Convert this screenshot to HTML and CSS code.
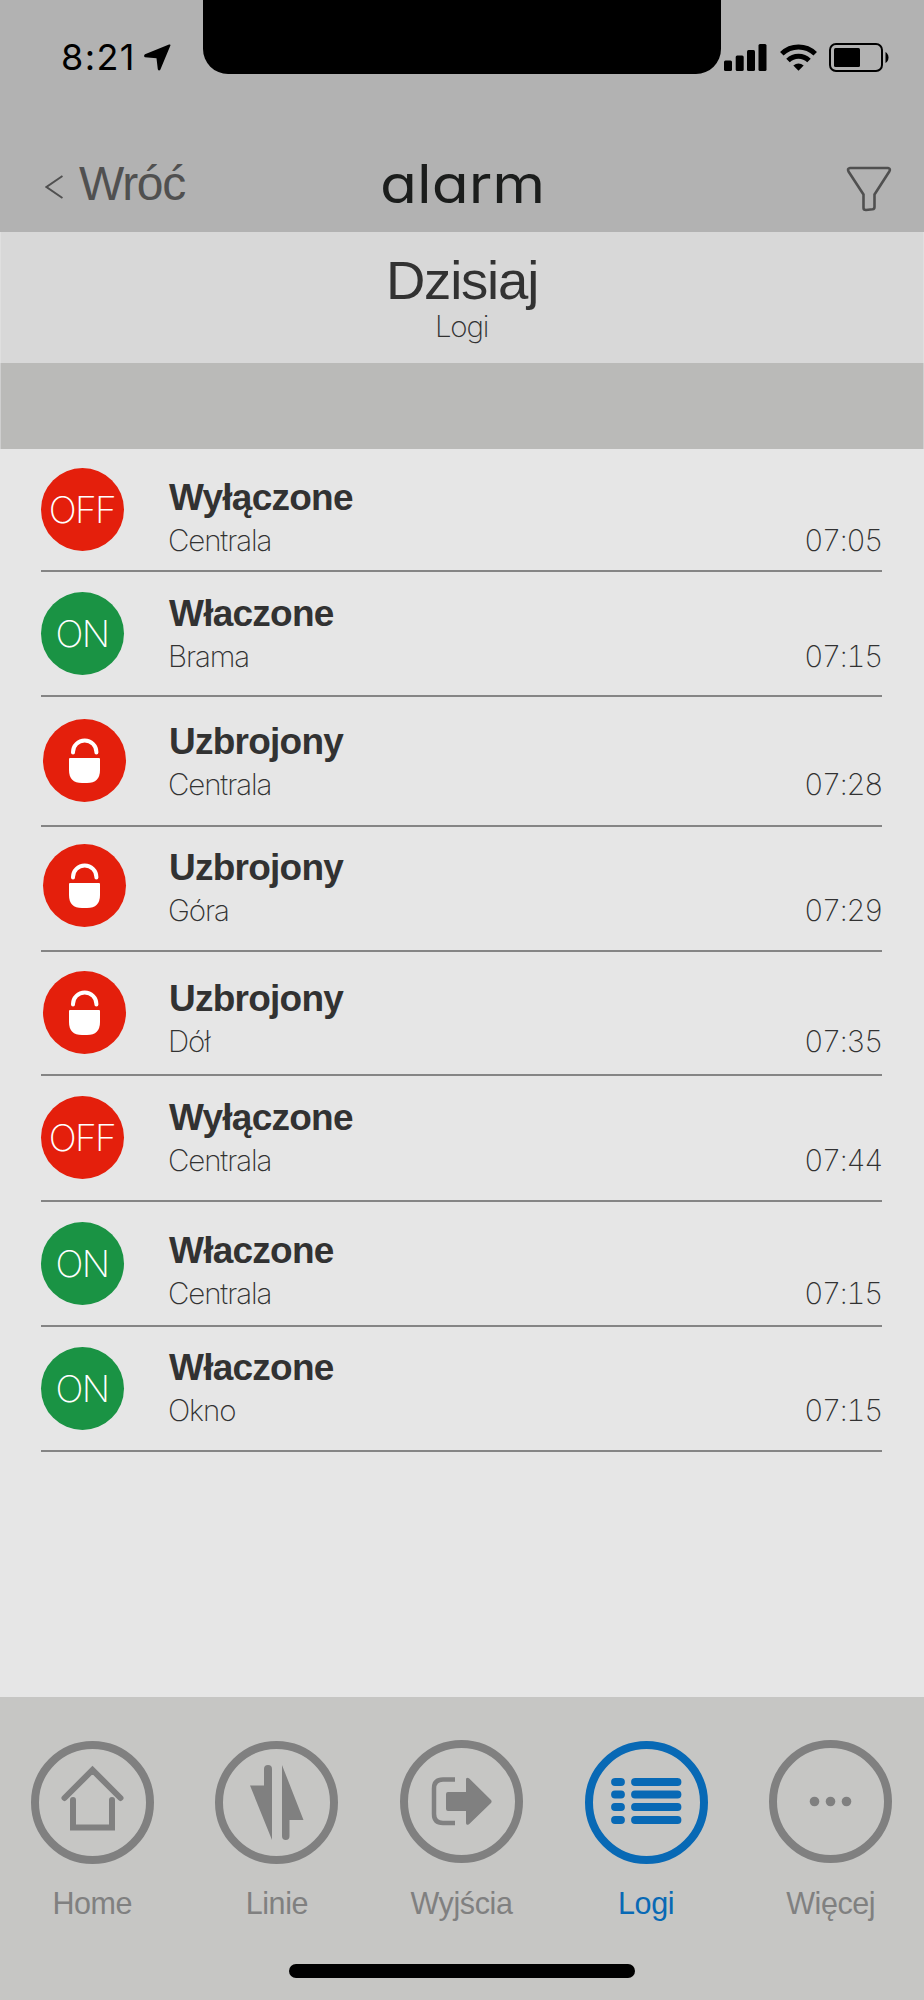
FILE: index.html
```
<!DOCTYPE html>
<html lang="pl">

<head>
    <meta charset="UTF-8">
    <meta name="viewport" content="width=device-width, initial-scale=1.0">
    <title>Logi</title>
    <link rel="stylesheet" href="styles.css">
</head>

<body>
    <!-- shared icons -->
    <svg width="0" height="0" class="defs">
        <symbol id="lock" viewBox="0 0 83 83">
            <path d="M30 33.500 V33 a11.700 11.500 0 0 1 23.400 0 V33.500" fill="none" stroke="#fff" stroke-width="4" stroke-linecap="round"/>
            <path d="M27 39 h29 q1 0 1 1 v11 q0 13 -13 13 h-5 q-13 0 -13 -13 v-11 q0 -1 1 -1z" fill="#fff"/>
        </symbol>
    </svg>

    <header class="header">
        <div class="notch"></div>
        <div class="status-bar">
            <span class="clock">8:21</span>
            <svg class="location" width="27" height="27" viewBox="0 0 27 27">
                <path d="M26.500 1.200 Q26.500 0 25 .600 L1 10.300 Q-.800 12 1 13.200 L12.500 14.200 L13.800 25.200 Q14.800 27.200 16.300 25.800 Z"/>
            </svg>
            <div class="signals">
                <svg width="43" height="27" viewBox="0 0 43 27">
                    <rect x="0" y="16.500" width="8" height="10.500" rx="1.500"/>
                    <rect x="11.700" y="11.500" width="8" height="15.500" rx="1.500"/>
                    <rect x="23" y="6" width="8" height="21" rx="1.500"/>
                    <rect x="34.500" y="0" width="8" height="27" rx="1.500"/>
                </svg>
                <svg width="37" height="27" viewBox="0 0 37 27">
                    <g fill="none" stroke="#000" stroke-width="5">
                        <path d="M1.800 9.700 A24 24 0 0 1 35.200 9.700"/>
                        <path d="M8 16.500 A15 15 0 0 1 29 16.500"/>
                    </g>
                    <path d="M13.300 21.500 Q18.500 17.500 23.700 21.500 L18.500 26.800z"/>
                </svg>
                <svg width="60" height="29" viewBox="0 0 60 29">
                    <rect x="1" y="1" width="52" height="27" rx="6" fill="none" stroke="#000" stroke-width="2"/>
                    <rect x="5" y="5" width="26" height="19" rx="1.500"/>
                    <path d="M56.500 9 Q59.500 11 59.500 14.500 T56.500 20z"/>
                </svg>
            </div>
        </div>
        <nav class="nav">
            <a class="back">
                <svg width="18" height="24" viewBox="0 0 18 24">
                    <path d="M17.500 1 L1.500 12 L17.500 23" fill="none" stroke="#505050" stroke-width="2"/>
                </svg>
                <span>Wróć</span>
            </a>
            <div class="brand">alarm</div>
            <a class="filter">
                <svg width="46" height="46" viewBox="0 0 46 46">
                    <path d="M4 2 H42 Q45 2.500 43.300 5.500 L28.500 28.500 V41 Q28.500 43 26.500 43.300 L20 44 Q17.500 44 17.500 42 V28.500 L2.500 5.500 Q1 2.500 4 2z" fill="none" stroke="#505050" stroke-width="2.600" stroke-linejoin="round"/>
                </svg>
            </a>
        </nav>
    </header>

    <section class="day">
        <h1>Dzisiaj</h1>
        <p>Logi</p>
    </section>
    <div class="band"></div>

    <main>
        <ul class="logs">
            <li class="log">
                <span class="badge off">OFF</span>
                <div class="info"><h2>Wyłączone</h2><p>Centrala</p></div>
                <time>07:05</time>
            </li>
            <li class="log">
                <span class="badge on">ON</span>
                <div class="info"><h2>Właczone</h2><p>Brama</p></div>
                <time>07:15</time>
            </li>
            <li class="log">
                <span class="badge lock"><svg width="83" height="83"><use href="#lock"/></svg></span>
                <div class="info"><h2>Uzbrojony</h2><p>Centrala</p></div>
                <time>07:28</time>
            </li>
            <li class="log">
                <span class="badge lock"><svg width="83" height="83"><use href="#lock"/></svg></span>
                <div class="info"><h2>Uzbrojony</h2><p>Góra</p></div>
                <time>07:29</time>
            </li>
            <li class="log">
                <span class="badge lock"><svg width="83" height="83"><use href="#lock"/></svg></span>
                <div class="info"><h2>Uzbrojony</h2><p>Dół</p></div>
                <time>07:35</time>
            </li>
            <li class="log">
                <span class="badge off">OFF</span>
                <div class="info"><h2>Wyłączone</h2><p>Centrala</p></div>
                <time>07:44</time>
            </li>
            <li class="log">
                <span class="badge on">ON</span>
                <div class="info"><h2>Właczone</h2><p>Centrala</p></div>
                <time>07:15</time>
            </li>
            <li class="log">
                <span class="badge on">ON</span>
                <div class="info"><h2>Właczone</h2><p>Okno</p></div>
                <time>07:15</time>
            </li>
        </ul>
    </main>

    <footer class="footer">
        <div class="tabs">
            <a class="tab">
                <svg width="123" height="123" viewBox="0 0 123 123">
                    <circle cx="61.500" cy="61.500" r="57.500"/>
                    <path d="M33.500 57 L61.500 29 L89.500 57 M42 59 V86.500 H81 V59" stroke-width="6" stroke-linecap="round"/>
                </svg>
                <span>Home</span>
            </a>
            <a class="tab">
                <svg width="123" height="123" viewBox="0 0 123 123">
                    <circle cx="61.500" cy="61.500" r="57.500"/>
                    <path class="solid" d="M49 28 q0 -4 4 -4 t4 4 V99 L35 44.500 H49z M67 24 L88.500 79 H74.500 V95 q0 4 -3.750 4 t-3.750 -4z"/>
                </svg>
                <span>Linie</span>
            </a>
            <a class="tab raised">
                <svg width="123" height="123" viewBox="0 0 123 123">
                    <circle cx="61.500" cy="61.500" r="57.500"/>
                    <path d="M55 39.500 H43 Q34 39.500 34 48.500 V74 Q34 83 43 83 H55" stroke-width="4.500"/>
                    <path class="solid" d="M48 52 H66 V39.500 q0 -3 3 -1.200 L91 60 q1.200 1.500 0 3 L69 84.200 q-3 1.500 -3 -1.200 V71 H48 q-2 0 -2 -2 V54 q0 -2 2 -2z"/>
                </svg>
                <span>Wyjścia</span>
            </a>
            <a class="tab active">
                <svg width="123" height="123" viewBox="0 0 123 123">
                    <circle cx="61.500" cy="61.500" r="57.500"/>
                    <path d="M30 41 H36 M50 41 H92.500 M30 53.500 H36 M50 53.500 H92.500 M30 66 H36 M50 66 H92.500 M30 79 H36 M50 79 H92.500" stroke-width="7.800" stroke-linecap="round"/>
                </svg>
                <span>Logi</span>
            </a>
            <a class="tab raised">
                <svg width="123" height="123" viewBox="0 0 123 123">
                    <circle cx="61.500" cy="61.500" r="57.500"/>
                    <g>
                        <circle class="solid" cx="45.500" cy="61.500" r="4.800"/>
                        <circle class="solid" cx="61.500" cy="61.500" r="4.800"/>
                        <circle class="solid" cx="77.500" cy="61.500" r="4.800"/>
                    </g>
                </svg>
                <span>Więcej</span>
            </a>
        </div>
        <div class="home-indicator"></div>
    </footer>
</body>

</html>
```
FILE: styles.css
```
* {
    box-sizing: border-box;
    margin: 0;
    padding: 0;
}

body {
    width: 924px;
    height: 2000px;
    display: flex;
    flex-direction: column;
    font-family: "Liberation Sans", Arial, sans-serif;
    background-color: #e6e6e6;
    color: #323232;
    overflow: hidden;
}

svg {
    display: block;
    flex: none;
}

.defs {
    position: absolute;
}

/* Header */
.header {
    position: relative;
    height: 232px;
    background-color: #b2b2b2;
}

.notch {
    position: absolute;
    top: 0;
    left: 203px;
    width: 518px;
    height: 74px;
    background: #000;
    border-radius: 0 0 25px 25px;
}

.status-bar {
    display: flex;
    align-items: flex-start;
    height: 110px;
    padding: 43px 35px 0 61px;
    color: #000;
}

.clock {
    width: 83px;
    font-family: Inter, sans-serif;
    font-size: 36px;
    line-height: 28px;
    letter-spacing: 1.4px;
}

.location {
    margin-top: 1px;
}

.signals {
    display: flex;
    align-items: center;
    gap: 12.5px;
    margin-left: auto;
}

.nav {
    display: grid;
    grid-template-columns: 1fr 1fr 1fr;
    align-items: start;
    padding: 47px 32px 0 45px;
}

.back {
    display: flex;
    align-items: center;
    gap: 16px;
    margin-top: 3px;
    color: #505050;
    font-size: 48px;
    line-height: 48px;
    letter-spacing: -1.3px;
}

.back svg {
    margin-top: 6px;
}

.brand {
    color: #1b1d1c;
    font-family: Inter, sans-serif;
    font-size: 53px;
    line-height: 54px;
    font-feature-settings: "cv11";
    text-align: center;
    margin-left: -11px;
    transform: scaleX(1.14);
}

.filter {
    margin: 9px 0 0 auto;
}

/* Current day */
.day {
    height: 131px;
    padding-top: 19px;
    background-color: #d8d8d8;
    border: solid #dfdfdf;
    border-width: 0 1px;
    text-align: center;
}

.day h1 {
    font-size: 54.5px;
    font-weight: normal;
    line-height: 60px;
    letter-spacing: -1.2px;
}

.day p {
    margin-top: -2px;
    padding-right: 1px;
    font-family: Inter, sans-serif;
    font-size: 29.5px;
    font-weight: 200;
    line-height: 34px;
    letter-spacing: -1.2px;
}

.band {
    height: 86px;
    background-color: #babab8;
    border: solid #cfcfcf;
    border-width: 0 1px;
}

/* Log list */
main {
    flex: 1;
}

.logs {
    list-style: none;
    margin: 0 42px 0 41px;
}

.log {
    --icon: 20px;
    --text: 19px;
    display: flex;
    align-items: flex-start;
    height: 125px;
    border-bottom: 2px solid #858585;
}

.log:nth-child(1) { height: 123px; --icon: 19px; --text: 26px; }
.log:nth-child(3) { height: 130px; --icon: 22px; --text: 22px; }
.log:nth-child(4) { --icon: 17px; --text: 18px; }
.log:nth-child(5) { height: 124px; --icon: 19px; --text: 24px; }
.log:nth-child(6) { height: 126px; }
.log:nth-child(7) { --text: 26px; }
.log:nth-child(8) { --text: 18px; }

.badge {
    flex: none;
    width: 83px;
    height: 83px;
    margin-top: var(--icon);
    padding-right: 1px;
    border-radius: 50%;
    background-color: #e41f0c;
    color: #fff;
    font-family: Inter, sans-serif;
    font-size: 37px;
    font-weight: 200;
    line-height: 83px;
    letter-spacing: -1.6px;
    text-align: center;
}

.badge.on {
    background-color: #1a9344;
}

.badge.lock {
    margin-left: 2px;
    margin-right: -2px;
    padding: 0;
}

.info {
    flex: 1;
    margin: var(--text) 0 0 44px;
}

.info h2 {
    padding: 1px 0 0 1px;
    font-size: 37px;
    line-height: 43px;
    letter-spacing: -0.75px;
}

.info p,
time {
    font-family: Inter, sans-serif;
    font-size: 29.5px;
    font-weight: 200;
    line-height: 43px;
    letter-spacing: -1.1px;
}

time {
    margin-top: calc(var(--text) + 44px);
    font-variant-numeric: tabular-nums;
    letter-spacing: -1.3px;
}

/* Bottom tabs */
.footer {
    height: 303px;
    padding-top: 44px;
    background-color: #c6c6c4;
}

.tabs {
    display: grid;
    grid-template-columns: repeat(5, 1fr);
    width: 923px;
    height: 223px;
}

.tab {
    display: flex;
    flex-direction: column;
    align-items: center;
    color: #808080;
    font-size: 30.5px;
    line-height: 36px;
    letter-spacing: -0.4px;
}

.tab svg {
    fill: none;
    stroke: currentColor;
    stroke-width: 8;
    margin-bottom: 21px;
}

.tab svg .solid {
    fill: currentColor;
    stroke: none;
}

.tab.raised svg {
    margin-top: -1px;
    margin-bottom: 22px;
}

.tab.active {
    color: #0869b5;
}

.home-indicator {
    width: 346px;
    height: 14px;
    margin: 0 auto;
    border-radius: 7px;
    background: #000;
}
```
